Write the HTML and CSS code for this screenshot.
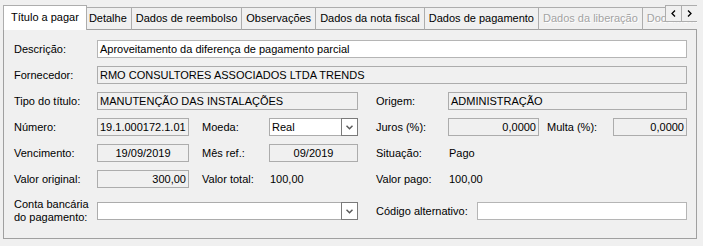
FILE: index.html
```html
<!DOCTYPE html>
<html lang="pt">
<head>
<meta charset="utf-8">
<title>Título a pagar</title>
<link rel="stylesheet" href="styles.css">
</head>
<body>
<div class="tabctl">
  <div class="tabstrip">
    <div class="tab active">Título a pagar</div>
    <div class="tab">Detalhe</div>
    <div class="tab">Dados de reembolso</div>
    <div class="tab">Observações</div>
    <div class="tab">Dados da nota fiscal</div>
    <div class="tab">Dados de pagamento</div>
    <div class="tab disabled">Dados da liberação</div>
    <div class="tab disabled">Documentos</div>
    <div class="scroller">
      <span class="sbtn"><svg width="5" height="7" viewBox="0 0 5 7"><polyline points="4,0.5 1,3.5 4,6.5" fill="none" stroke="#000" stroke-width="1.3"/></svg></span>
      <span class="sbtn"><svg width="5" height="7" viewBox="0 0 5 7"><polyline points="1,0.5 4,3.5 1,6.5" fill="none" stroke="#000" stroke-width="1.3"/></svg></span>
    </div>
  </div>
  <div class="panel">
    <div class="form">
      <span class="lbl c1">Descrição:</span>
      <span class="field edit span-all">Aproveitamento da diferença de pagamento parcial</span>

      <span class="lbl c1">Fornecedor:</span>
      <span class="field ro span-all">RMO CONSULTORES ASSOCIADOS LTDA TRENDS</span>

      <span class="lbl c1">Tipo do título:</span>
      <span class="field ro c2-5">MANUTENÇÃO DAS INSTALAÇÕES</span>
      <span class="lbl c7">Origem:</span>
      <span class="field ro c8-end">ADMINISTRAÇÃO</span>

      <span class="lbl c1">Número:</span>
      <span class="field ro c2">19.1.000172.1.01</span>
      <span class="lbl c4">Moeda:</span>
      <span class="select c5"><span class="sel-text">Real</span><span class="drop"><svg width="7" height="5" viewBox="0 0 7 5"><polyline points="0.5,0.8 3.5,3.8 6.5,0.8" fill="none" stroke="#5a5a5a" stroke-width="1.5"/></svg></span></span>
      <span class="lbl c7">Juros (%):</span>
      <span class="field ro right c8-9">0,0000</span>
      <span class="lbl c11">Multa (%):</span>
      <span class="field ro right c12">0,0000</span>

      <span class="lbl c1">Vencimento:</span>
      <span class="field ro center c2">19/09/2019</span>
      <span class="lbl c4">Mês ref.:</span>
      <span class="field ro center c5">09/2019</span>
      <span class="lbl c7">Situação:</span>
      <span class="val c8-9">Pago</span>

      <span class="lbl c1">Valor original:</span>
      <span class="field ro right c2">300,00</span>
      <span class="lbl c4">Valor total:</span>
      <span class="val c5">100,00</span>
      <span class="lbl c7">Valor pago:</span>
      <span class="val c8-9">100,00</span>

      <span class="lbl c1 two last">Conta bancária<br>do pagamento:</span>
      <span class="select c2-5 last"><span class="sel-text"></span><span class="drop"><svg width="7" height="5" viewBox="0 0 7 5"><polyline points="0.5,0.8 3.5,3.8 6.5,0.8" fill="none" stroke="#5a5a5a" stroke-width="1.5"/></svg></span></span>
      <span class="lbl c7-8 last">Código alternativo:</span>
      <span class="field edit c9-end last"></span>
    </div>
  </div>
</div>
</body>
</html>
```

FILE: styles.css
```css
html, body {
  margin: 0;
  padding: 0;
  background: #f0f0f0;
  overflow: hidden;
}

body {
  font-family: "Liberation Sans", Arial, sans-serif;
  font-size: 11px;
  color: #000;
}

.tabctl {
  margin-left: 3px;
  width: 694px;
}

.tabstrip {
  position: relative;
  display: flex;
  align-items: flex-end;
  height: 30px;
  padding-left: 2px;
  overflow: hidden;
  box-shadow: inset 0 -1px #a0a0a0;
}

.tab {
  flex-shrink: 0;
  white-space: nowrap;
  height: 21px;
  line-height: 21px;
  padding: 0 4px;
  border: 1px solid #adadad;
  border-bottom-color: #a0a0a0;
  margin-left: -1px;
  background: #f0f0f0;
}

.tab.active {
  position: relative;
  z-index: 1;
  height: 24px;
  line-height: 22px;
  padding: 0 7px;
  margin: 0 -2px 0 -2px;
  border-bottom: none;
  background: #fff;
}

.tab.disabled {
  color: #a3a3a3;
  text-shadow: 1px 1px 0 #fff;
}

.scroller {
  position: absolute;
  z-index: 2;
  top: 5px;
  right: -1px;
  display: flex;
}

.sbtn {
  width: 15px;
  height: 15px;
  border: 1px solid #adadad;
  background: #f0f0f0;
  display: flex;
  align-items: center;
  justify-content: center;
}

.sbtn + .sbtn {
  margin-left: -1px;
}

.panel {
  height: 198px;
  border: 1px solid #a0a0a0;
  border-top: none;
  padding: 10px 0 0 10px;
  background: #f0f0f0;
}

.form {
  display: grid;
  grid-template-columns: 83px 92px 13px 67px 89px 18px 72px 29px 62px 8px 66px 74px;
  grid-template-rows: repeat(6, 18px) 28px;
  row-gap: 8px;
  align-items: center;
}

.lbl {
  white-space: nowrap;
  line-height: 14px;
}

.lbl.two {
  line-height: 13px;
}

.val {
  padding-left: 1px;
}

.field {
  box-sizing: border-box;
  height: 18px;
  line-height: 16px;
  padding: 0 2px;
  border: 1px solid #acacac;
  white-space: nowrap;
  overflow: hidden;
}

.field.edit {
  background: #fff;
  border-color: #b5b5b5;
}

.field.ro {
  background: #f0f0f0;
}

.right { text-align: right; }
.center { text-align: center; }

.select {
  box-sizing: border-box;
  height: 18px;
  display: flex;
  border: 1px solid #acacac;
  background: #fff;
}

.sel-text {
  flex: 1;
  line-height: 16px;
  padding-left: 2px;
}

.drop {
  box-sizing: border-box;
  width: 17px;
  margin: -1px -1px -1px 0;
  border: 1px solid #7a7a7a;
  background: #fff;
  display: flex;
  align-items: center;
  justify-content: center;
}

.c1 { grid-column: 1; }
.c2 { grid-column: 2; }
.c4 { grid-column: 4; }
.c5 { grid-column: 5; }
.c7 { grid-column: 7; }
.c11 { grid-column: 11; }
.c12 { grid-column: 12; }
.span-all { grid-column: 2 / -1; }
.c2-5 { grid-column: 2 / 6; }
.c8-end { grid-column: 8 / -1; }
.c8-9 { grid-column: 8 / 10; }
.c7-8 { grid-column: 7 / 9; }
.c9-end { grid-column: 9 / -1; }

.last {
  margin-top: 2px;
}
```
